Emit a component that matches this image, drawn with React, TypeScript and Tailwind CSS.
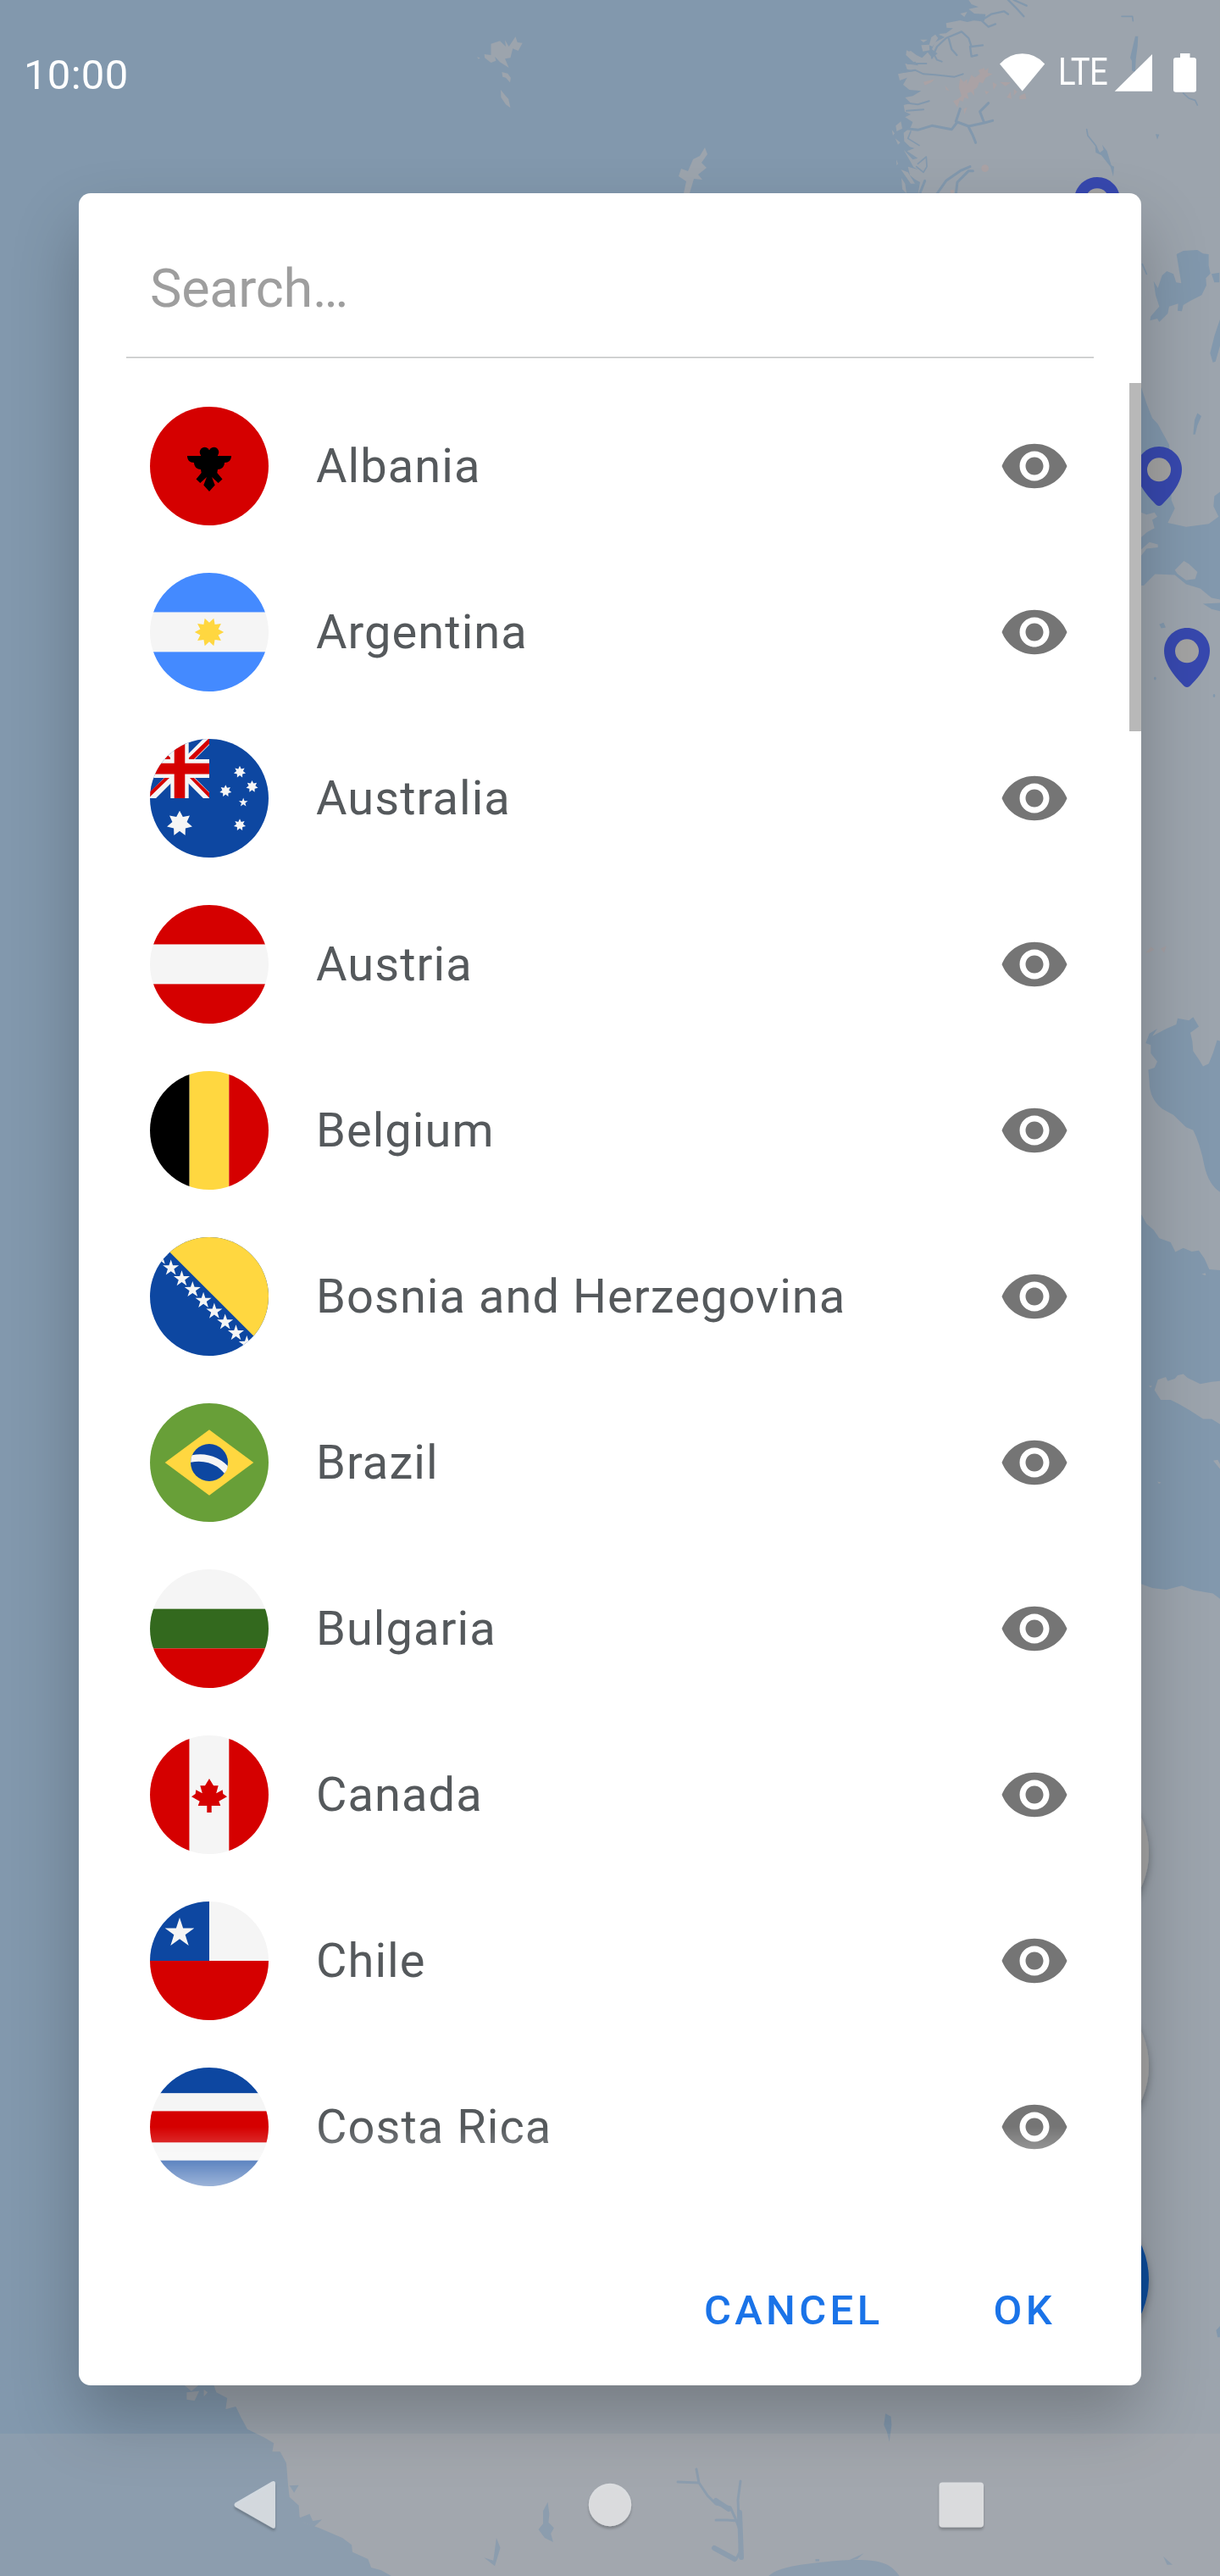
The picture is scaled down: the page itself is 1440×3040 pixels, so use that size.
import React from "react";

const SEA = "#8298ad";
const LAND = "#9ca4ad";

function star(cx: number, cy: number, outer: number, inner: number, n: number) {
  const pts: string[] = [];
  for (let i = 0; i < n * 2; i++) {
    const r = i % 2 === 0 ? outer : inner;
    const a = (Math.PI * i) / n - Math.PI / 2;
    pts.push(`${(cx + r * Math.cos(a)).toFixed(2)},${(cy + r * Math.sin(a)).toFixed(2)}`);
  }
  return pts.join(" ");
}

const RED = "#d50000";
const WHITE = "#f5f5f5";
const BLUE = "#0d47a1";
const YELLOW = "#ffd740";

function Stripes({ colors, vertical }: { colors: [number, string][]; vertical?: boolean }) {
  let at = 0;
  return (
    <>
      {colors.map(([size, fill], i) => {
        const start = at;
        at += size;
        return vertical ? (
          <rect key={i} x={start} y={0} width={size} height={140} fill={fill} />
        ) : (
          <rect key={i} x={0} y={start} width={140} height={size} fill={fill} />
        );
      })}
    </>
  );
}

const T = 140 / 3;

const countries: { name: string; flag: React.ReactNode }[] = [
  {
    name: "Albania",
    flag: (
      <>
        <rect width="140" height="140" fill={RED} />
        <circle cx="64.6" cy="53.6" r="5.9" />
        <circle cx="75.4" cy="53.6" r="5.9" />
        <path d="M44 58H60V54L70 51L80 54V58H96C96 63 93 66 88 66C88 71 84 74 80 74L79.300 78L85.500 85.500L80.700 90L73 83L76.700 92.500L70 100L63.300 92.500L67 83L59.300 90L54.500 85.500L60.700 78L60 74C56 74 52 71 52 66C47 66 44 63 44 58Z" />
      </>
    ),
  },
  {
    name: "Argentina",
    flag: (
      <>
        <Stripes colors={[[T, "#448aff"], [T, WHITE], [T, "#448aff"]]} />
        <g transform="rotate(18 70 70)">
          <polygon points={star(70, 70, 17.2, 11.2, 10)} fill={YELLOW} />
        </g>
      </>
    ),
  },
  {
    name: "Australia",
    flag: (
      <>
        <rect width="140" height="140" fill={BLUE} />
        <svg x="0" y="0" width="70" height="70" viewBox="0 0 70 70">
          <path d="M0 0L70 70M70 0L0 70" stroke={WHITE} strokeWidth="10" />
          <path d="M47 45.900H52L70 63.600V69.500ZM45.700 22.500L69 0H70V6L52 24.100H45.700ZM0 62.500L17.300 45.900H23L0 68.300ZM18 24.100L0 6V0L24 22V24.100Z" fill={RED} />
          <path d="M24.300 0H45.700V24.100H70V45.900H45.700V70H24.300V45.900H0V24.100H24.300Z" fill={WHITE} />
          <path d="M28.700 0H41.300V28.800H70V41.400H41.300V70H28.700V41.400H0V28.800H28.700Z" fill={RED} />
        </svg>
        <g fill={WHITE}>
          <polygon points={star(35, 100, 15.3, 8.8, 7)} />
          <polygon points={star(106, 39, 7.2, 4, 7)} />
          <polygon points={star(89.3, 61.4, 7.2, 4, 7)} />
          <polygon points={star(120.5, 56.2, 7.2, 4, 7)} />
          <polygon points={star(106, 101.5, 7.2, 4, 7)} />
          <polygon points={star(110.2, 75, 5.6, 2.3, 5)} />
        </g>
      </>
    ),
  },
  { name: "Austria", flag: <Stripes colors={[[T, RED], [T, WHITE], [T, RED]]} /> },
  { name: "Belgium", flag: <Stripes vertical colors={[[T, "#000"], [T, YELLOW], [T, RED]]} /> },
  {
    name: "Bosnia and Herzegovina",
    flag: (
      <>
        <rect width="140" height="140" fill={BLUE} />
        <polygon points="5.7,0 140,0 140,134.3" fill={YELLOW} />
        {[-1, 0, 1, 2, 3, 4, 5, 6, 7].map((k) => (
          <polygon key={k} points={star(24.7 + k * 12.8, 36.4 + k * 12.8, 10, 3.9, 5)} fill={WHITE} />
        ))}
      </>
    ),
  },
  {
    name: "Brazil",
    flag: (
      <>
        <rect width="140" height="140" fill="#689f38" />
        <polygon points="17.700,70 70,31.200 122.300,70 70,108.800" fill={YELLOW} />
        <circle cx="70" cy="70" r="22" fill={BLUE} />
        <path d="M49.700 61.300C64 58 80 62 91.800 74Q91.500 79 87.800 82.700C78 71 64 66.500 48.100 69.700Q48 65 49.700 61.300Z" fill={WHITE} />
      </>
    ),
  },
  { name: "Bulgaria", flag: <Stripes colors={[[T, WHITE], [T, "#33691e"], [T, RED]]} /> },
  {
    name: "Canada",
    flag: (
      <>
        <Stripes vertical colors={[[T, RED], [T, WHITE], [T, RED]]} />
        <path
          d="M70 51L75 59.300H80.700L78 69L75.500 69.700L85.700 64.300L86.300 69L91 72.300L81.300 77.700L83.300 83H72.700V91H67.300V83H56.700L58.700 77.700L49 72.300L53.700 69L54.300 64.300L64.500 69.700L62 69L59.300 59.300H65Z"
          fill={RED}
        />
      </>
    ),
  },
  {
    name: "Chile",
    flag: (
      <>
        <rect width="140" height="140" fill={WHITE} />
        <rect width="70" height="70" fill={BLUE} />
        <rect y="70" width="140" height="70" fill={RED} />
        <polygon points={star(35, 37.2, 18.2, 7, 5)} fill={WHITE} />
      </>
    ),
  },
  {
    name: "Costa Rica",
    flag: <Stripes colors={[[30.4, BLUE], [21, WHITE], [37.2, RED], [21, WHITE], [30.4, BLUE]]} />,
  },
];

function Pin({ x, y }: { x: number; y: number }) {
  return (
    <g transform={`translate(${x} ${y})`}>
      <path d="M0 0C15 0 27 12 27 27C27 44 12 60 3 69Q0 71 -3 69C-12 60 -27 44 -27 27C-27 12 -15 0 0 0Z" fill="#3748ae" />
      <circle cy="27.300" r="14" fill="#a3a3a3" />
    </g>
  );
}

function MapBackdrop() {
  return (
    <svg className="absolute inset-0 h-full w-full" viewBox="0 0 1440 3040" fill={LAND}>
      <defs>
        <filter id="fab" x="-20%" y="-20%" width="140%" height="140%">
          <feDropShadow dx="0" dy="5" stdDeviation="5" floodOpacity="0.3" />
        </filter>
      </defs>
      <rect width="1440" height="3040" fill={SEA} />
      <path d="M1300 200H1440V3040H1300Z" />

      {/* Faroe and Shetland islands */}
      <g transform="scale(.4592 .3333)">
        <path d="M1262 155L1285 145L1300 165L1298 142L1308 165L1325 130L1330 150L1343 152L1332 180L1318 172L1312 205L1298 208L1308 240L1285 220L1272 200L1275 215L1262 222L1246 205L1245 192L1262 195ZM1290 255L1305 260L1313 275L1311 292L1300 275L1292 272ZM1287 318L1300 340L1307 350L1312 382L1300 370L1288 345ZM1226 202L1234 205L1230 209Z" />
      </g>
      <path d="M832 174L835 182L828 192L834 198L824 206L829 212L819 211L814 228H807L810 214L801 208L804 199L812 202L818 188L826 184Z" />

      {/* Norwegian coast, fjords and lakes */}
      <g transform="scale(.33333) translate(3000 0)">
        <path d="M430 0L440 15L465 25L430 32L450 48L490 50L485 75L460 70L425 78L400 72L350 82L352 98L375 100L350 118L325 120L345 132L310 150L300 175L320 190L300 205L285 185L265 205L245 195L225 180L210 185L238 215L252 232L205 225L212 245L240 252L200 258L182 268L212 275L198 300L220 318L262 322L232 340L205 345L225 365L200 372L204 395L225 405L205 415L232 432L225 450L200 470L202 500L222 520L238 525L212 535L250 560L232 565L200 530L235 592L250 600L215 590L222 620L240 635L258 645L250 690L270 700H1320V0Z" />
        <path d="M322 122L350 122L345 130ZM298 132L312 122L322 135L302 165L290 160ZM262 160L290 158L292 178L268 182ZM210 178L225 185L248 215L235 220L208 195ZM400 48L425 42L415 60ZM258 140L285 140L270 150ZM180 262L200 258L212 275L186 285ZM172 445L190 430L195 455L175 465ZM158 460L168 472L162 480ZM170 490L188 505L180 512ZM190 600L215 610L240 650L225 650ZM192 630L205 650L210 685L195 670ZM174 565L180 580L175 585Z" />
        <g fill="none" stroke={SEA} strokeLinecap="round" strokeLinejoin="round">
          <path d="M570 0L595 25L625 58M590 0L635 20M440 68L475 72L510 50L555 40L570 50M475 72L500 95L525 85M300 205L318 165L350 135L405 112L430 135L440 165L480 160M360 138L370 175L388 195M435 165L440 200L460 195" strokeWidth="7" />
          <path d="M190 255L240 248L270 262L310 265L380 272L410 262M280 225L215 225M300 180L318 212L335 218M215 365L250 370L290 358M210 392L270 388" strokeWidth="6" />
          <path d="M210 455L250 460L300 445L370 458L390 432L430 447L485 435L515 427M385 430L400 385M430 450L445 480L455 505M485 435L470 395L500 365" strokeWidth="9" />
          <path d="M225 465L215 490L255 515M245 590L270 610L282 590L280 555L250 580" strokeWidth="5" />
          <path d="M315 690L350 640L400 605L435 590M385 685L390 645L430 605L445 605M255 690L275 640" strokeWidth="9" />
          <path d="M848 458L852 480L880 515L890 540M972 58H1010L1012 74M1190 330L1210 348L1232 355L1240 372M1045 935L1060 970" strokeWidth="5" />
        </g>
        <g fill={SEA}>
          <path d="M1020 128H1030L1028 165L1022 210L1020 255L1008 250V215L1002 205ZM878 520L895 540L908 530L903 512L920 535L935 585L945 590L942 625L932 590L900 550L880 540ZM1092 475L1105 476L1098 494Z" />
          <path d="M1166 900L1190 888L1240 885L1260 898L1280 900L1280 940L1286 968L1270 985L1272 1010L1255 1045L1215 1065L1190 1080L1185 1102L1170 1100L1172 1075L1140 1085L1135 1110L1105 1140L1098 1128L1072 1135L1075 1120L1105 1085L1092 1045L1085 995L1100 1020L1115 975L1132 960L1155 970L1165 1000L1183 1003ZM1320 1130L1300 1190L1285 1250L1295 1283L1304 1280L1320 1225ZM1290 970L1318 965V1000H1300Z" />
        </g>
        <g fill="#aaa2a5">
          <path d="M400 275L412 290L425 280V300L440 265L452 275L470 262L465 248L485 240L488 250L500 240L498 258L515 262L490 275L480 295L468 290L460 310L448 318L450 340L438 325L425 330L430 350L415 345L410 360L398 355L390 380L375 358L390 352L405 340L395 310ZM270 290L310 280L300 290L275 302ZM346 302L362 322L350 318ZM515 290L530 300L518 318ZM540 290L580 292L560 305ZM487 322L502 325L492 335ZM565 345L578 325L582 350ZM590 315L602 325L590 338ZM610 340L630 330L634 350L610 352ZM412 385L425 380L415 405Z" />
          <circle cx="488" cy="596" r="13" />
          <circle cx="372" cy="678" r="7" />
        </g>
      </g>

      {/* Baltic coast */}
      <g transform="translate(1200 440) scale(.33333 .4847)">
        <g fill={SEA}>
          <path d="M441 35L460 75L480 110L500 125L520 150L540 175L548 310L560 330L535 365L600 375L680 368L715 350L697 325L700 300L720 290V552L690 548L650 525L600 515L560 492L490 490L450 518H400V35Z" />
          <path d="M625 150L630 115L640 98L654 105L640 128L632 150ZM505 612L520 608L528 620L512 622ZM660 562L720 560V580L690 575Z" />
          <circle cx="490" cy="744" r="4" />
          <circle cx="699" cy="786" r="4" />
        </g>
        <path d="M441 340L460 345L488 340L498 350L480 358L488 378L462 388L441 400V430L470 412L500 418L500 425L460 428L441 445ZM560 480L592 458L610 465L640 485L632 502L600 505L570 490Z" />
        <path d="M457 1412L475 1398L488 1404L470 1411ZM510 1402L530 1395L522 1412Z" fill="#a4a0a4" />
      </g>

      {/* Mediterranean */}
      <g transform="translate(1200 1180) scale(.33333 .4847)">
        <g fill={SEA}>
          <path d="M457 105L470 82L498 70L480 88L530 70L565 60L570 45L610 50L625 42L645 65L615 80L622 100L625 125L645 145L660 162L680 155L695 130L710 98L720 100V468Q680 450 665 405Q650 350 625 317L600 310L555 280L515 265Q470 240 470 200L466 170L488 165L498 150L475 130L475 110Z" />
          <path d="M400 500L441 522L460 545L485 560L505 580L545 590L562 614L590 604L620 613L645 610L665 630L682 656L720 658V1458L695 1445L625 1437L585 1426L530 1436L480 1432L441 1422L400 1410Z" />
        </g>
        <path d="M488 950L500 925L528 918L535 928L560 922L570 914L590 911L605 920L650 935L690 930L720 928V1033L690 1020L660 1020L615 1000L575 984L545 974L510 974ZM655 668L668 665L670 671ZM696 1122L712 1120L720 1130V1142ZM498 1173L512 1175L504 1178ZM468 940L480 940L474 944Z" />
      </g>

      {/* West African coast */}
      <g transform="translate(0 2680) scale(.91837 .33333)">
        <path d="M230 350L275 405L278 430L292 450L290 490L303 480L310 520L318 560L340 590L352 610L350 640L360 640L368 680L370 750L372 800L384 830L385 870L390 890L410 910L440 945L452 970L453 995L473 1020L477 1050L490 1060L503 1080H1568V350ZM237 405L255 405L246 425ZM240 430L256 425L250 460L240 455ZM262 420L267 430L262 445Z" />
        <g fill={SEA}>
          <path d="M988 1080C1000 1045 1040 1035 1075 1026C1130 1015 1145 1035 1156 1080Z" />
          <path d="M1138 505L1145 515L1146 545L1143 605L1140 570L1136 545ZM704 818L706 860L705 890L712 910L708 930L711 960L700 945L692 915L698 895L698 850ZM1568 195L1563 210L1565 235H1568ZM638 945L643 980L636 1045L622 1015L634 1025ZM1495 1010L1507 1040H1500Z" />
          <path d="M372 760L384 758L378 785ZM384 875L398 860L402 885L414 880L404 905L390 890ZM1090 1025L1110 1000L1102 1020ZM1048 1020L1053 1020V1028H1048Z" />
        </g>
      </g>

      {/* Volta basin */}
      <g fill="none" stroke={SEA} strokeLinecap="round" strokeLinejoin="round">
        <path d="M822 2914L825 2930L800 2929M825 2930L835 2945L845 2955L862 2959L868 2972L874 2988L873 3012L869 3020M874 2928L871 2950L872 2975L858 2974L845 2974" strokeWidth="3" />
        <path d="M845 2951L860 2961M873 2965L875 3018M843 3007L867 3020" strokeWidth="6" />
      </g>

      <Pin x={1295} y={209} />
      <Pin x={1368} y={527} />
      <Pin x={1401} y={741} />
      <g filter="url(#fab)">
        <circle cx="1258" cy="2186" r="98" fill="#a6a6a6" />
        <circle cx="1258" cy="2438" r="98" fill="#a6a6a6" />
        <circle cx="1258" cy="2690" r="98" fill="#114d9c" />
      </g>
    </svg>
  );
}

function EyeIcon() {
  return (
    <svg className="size-[84px] shrink-0" viewBox="0 0 24 24" fill="#757575">
      <path d="M12 4.500C7 4.500 2.730 7.610 1 12c1.730 4.390 6 7.500 11 7.500s9.270-3.110 11-7.500c-1.730-4.390-6-7.500-11-7.500zM12 17c-2.760 0-5-2.240-5-5s2.240-5 5-5 5 2.240 5 5-2.240 5-5 5zm0-8c-1.660 0-3 1.340-3 3s1.340 3 3 3 3-1.340 3-3-1.340-3-3-3z" />
    </svg>
  );
}

function StatusBar() {
  return (
    <header className="relative flex h-[228px] items-start justify-between pr-7 pl-7 text-white">
      <span className="mt-[60px] text-[49px] leading-[58px] tracking-[0.3px]">10:00</span>
      <div className="mt-[63px] flex h-[46px] items-start">
        <svg className="h-[46px] w-[54px]" viewBox="0 0 54 46" fill="currentColor">
          <path d="M0 12.500Q11 .3 26.700 .3T53.200 12.500L26.700 44.500Z" />
        </svg>
        <span className="mt-[1px] ml-[15px] block w-[66px] origin-left scale-x-[.88] text-[43.500px] leading-[44px] tracking-[-0.800px]">LTE</span>
        <svg className="h-[46px] w-[45px]" viewBox="0 0 45 46" fill="currentColor">
          <path d="M45 1V44.700H.7Z" />
        </svg>
        <svg className="ml-[25px] h-[46px] w-[27px]" viewBox="0 0 27 46" fill="currentColor">
          <path d="M8 0H19.500V5H24Q27 5 27 8V43Q27 45.700 24 45.700H3Q0 45.700 0 43V8Q0 5 3 5H8Z" />
        </svg>
      </div>
    </header>
  );
}

function NavBar() {
  return (
    <nav className="relative mt-[57px] h-[168px] bg-[#ccbab4]/15">
      <svg className="h-full w-full" viewBox="0 0 1440 168" fill="#fff" fillOpacity="0.62">
        <defs>
          <filter id="nav" x="-20%" y="-20%" width="140%" height="150%">
            <feDropShadow dx="0" dy="3" stdDeviation="1.500" floodOpacity="0.35" />
          </filter>
        </defs>
        <g filter="url(#nav)">
          <path d="M278 81.500L321 56.500Q325 55 325 59V109Q325 113 321 111L278 86.500Q275 84 278 81.500Z" />
          <circle cx="720" cy="84" r="25.200" />
          <rect x="1108.500" y="57.500" width="52.500" height="53" rx="4" />
        </g>
      </svg>
    </nav>
  );
}

export default function App() {
  return (
    <div className="relative flex h-[3040px] w-[1440px] flex-col overflow-hidden font-['Roboto',sans-serif]">
      <MapBackdrop />
      <StatusBar />
      <main className="relative mx-[93px] flex h-[2587px] flex-col rounded-[14px] bg-white shadow-[0_40px_80px_rgba(0,0,0,0.24)]">
        <div className="mx-14 flex h-[194px] items-center border-b border-[#c4c6c6] px-7 pt-[33px] text-[63px] tracking-[-0.250px] text-[#9e9e9e] shadow-[0_1px_0_#dedfdf]">
          Search…
        </div>
        <div className="relative mt-[30px] h-[2180px] overflow-hidden">
          <ul className="[mask-image:linear-gradient(to_bottom,#000_2058px,transparent_2177px)]">
            {countries.map(({ name, flag }) => (
              <li key={name} className="flex h-[196px] items-center pr-[84px] pl-[84px]">
                <svg className="size-[140px] shrink-0 rounded-full" viewBox="0 0 140 140">
                  {flag}
                </svg>
                <span className="ml-14 flex-1 text-[56px] tracking-[1.050px] whitespace-nowrap text-[#55595c]">{name}</span>
                <EyeIcon />
              </li>
            ))}
          </ul>
          <div className="absolute top-0 right-0 h-[411px] w-[14px] bg-[#b8b8b8]" />
        </div>
        <footer className="flex flex-1 items-center justify-end gap-[130px] pt-[6px] pr-[101px] text-[49px] font-medium tracking-[4.375px] text-[#1a73e8]">
          <button>CANCEL</button>
          <button>OK</button>
        </footer>
      </main>
      <NavBar />
    </div>
  );
}
